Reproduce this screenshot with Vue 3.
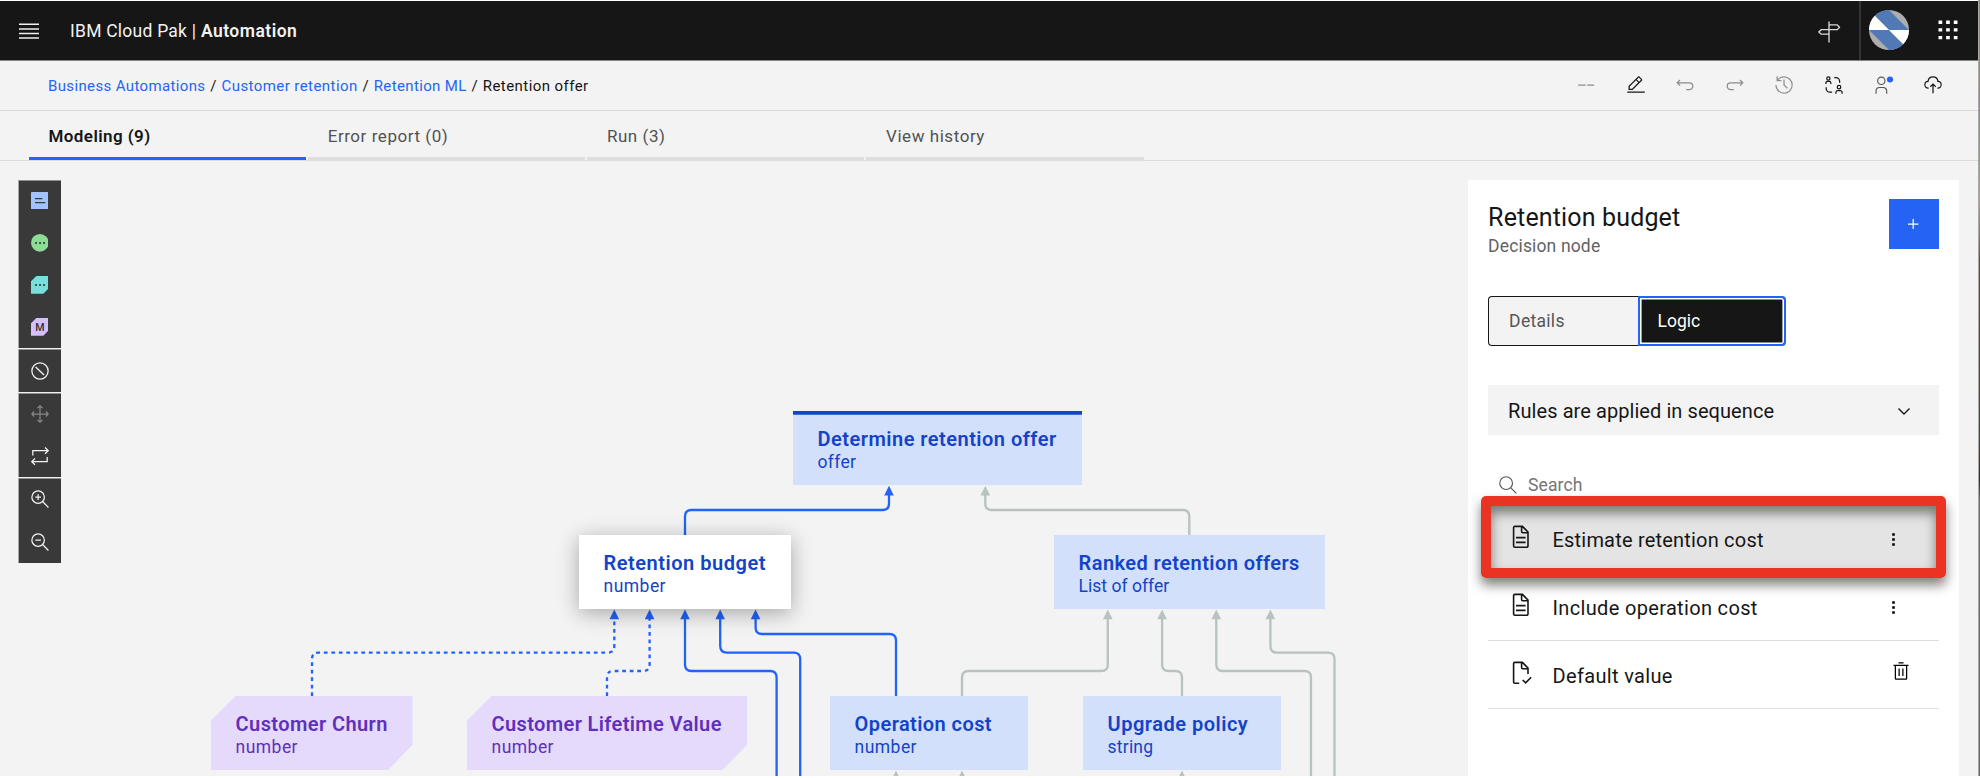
<script setup>
const crumbs = ['Business Automations', 'Customer retention', 'Retention ML']

const tabs = [
  { label: 'Modeling (9)', active: true },
  { label: 'Error report (0)' },
  { label: 'Run (3)' },
  { label: 'View history' },
]

const tools = [
  ['decision', 'data', 'function', 'ml'],
  ['none'],
  ['move', 'swap'],
  ['zoom-in', 'zoom-out'],
]

const ORIGIN_Y = 161

const nodes = [
  { title: 'Determine retention offer', type: 'offer', x: 793, y: 411, w: 289, kind: 'root', ls: 0.48, lt: 0.3 },
  { title: 'Retention budget', type: 'number', x: 579, y: 535, w: 212, kind: 'selected', ls: 0.52, lt: 0.45 },
  { title: 'Ranked retention offers', type: 'List of offer', x: 1054, y: 535, w: 271, kind: 'decision', ls: 0.43, lt: 0.02 },
  { title: 'Customer Churn', type: 'number', x: 211, y: 696, w: 201.5, kind: 'model', ls: 0.41, lt: 0.45 },
  { title: 'Customer Lifetime Value', type: 'number', x: 467, y: 696, w: 280, kind: 'model', ls: 0.37, lt: 0.45 },
  { title: 'Operation cost', type: 'number', x: 830, y: 696, w: 198, kind: 'decision', ls: 0.42, lt: 0.45 },
  { title: 'Upgrade policy', type: 'string', x: 1083, y: 696, w: 198, kind: 'decision', ls: 0.5, lt: 0.2 },
]

/* from (x1, y1) up to the bend line, across, then up to the arrow at (x2, y2) */
const links = [
  { x1: 685, y1: 535, bend: 510, x2: 889, y2: 485.7, kind: 'blue' },
  { x1: 1189.3, y1: 535, bend: 510, x2: 985.3, y2: 485.7, kind: 'grey' },
  { x1: 312, y1: 696, bend: 652.6, x2: 614.3, y2: 609.5, kind: 'blue dashed' },
  { x1: 607, y1: 696, bend: 671, x2: 649.6, y2: 609.5, kind: 'blue dashed' },
  { x1: 776.6, y1: 790, bend: 671, x2: 685, y2: 609.5, kind: 'blue' },
  { x1: 800.2, y1: 790, bend: 652.6, x2: 720.2, y2: 609.5, kind: 'blue' },
  { x1: 896, y1: 696, bend: 634, x2: 755.6, y2: 609.5, kind: 'blue' },
  { x1: 962, y1: 696, bend: 671, x2: 1107.8, y2: 609.5, kind: 'grey' },
  { x1: 1182, y1: 696, bend: 671, x2: 1162.1, y2: 609.5, kind: 'grey' },
  { x1: 1311, y1: 790, bend: 671, x2: 1216.3, y2: 609.5, kind: 'grey' },
  { x1: 1334.5, y1: 790, bend: 652.6, x2: 1270.4, y2: 609.5, kind: 'grey' },
]
const stubs = [896, 962, 1182]

function linkPath({ x1, y1, bend, x2, y2 }) {
  const r = 6.5
  const d = Math.sign(x2 - x1)
  return `M${x1} ${y1}V${bend + r}Q${x1} ${bend} ${x1 + d * r} ${bend}H${x2 - d * r}Q${x2} ${bend} ${x2} ${bend - r}V${y2 + 8}`
}
function arrow(x, y) {
  return `M${x} ${y}l4.8 9.8h-9.6z`
}
</script>

<template>
  <div class="app">
    <div class="main">
      <header class="topbar">
        <svg class="burger" viewBox="0 0 20 16"><path d="M0 1.3h20M0 5.9h20M0 10.5h20M0 15h20" /></svg>
        <div class="brand"><span>IBM Cloud Pak | </span><b>Automation</b></div>
        <svg class="sign" viewBox="0 0 32 32">
          <path d="M16 2v28M16 6.5h11l3 3.2-3 3.2H5.5l-3 3 3 3H16" />
        </svg>
        <div class="rule"></div>
        <svg class="avatar" viewBox="-20 -20 40 40">
          <defs><clipPath id="disc"><circle r="20" /></clipPath></defs>
          <g clip-path="url(#disc)">
            <rect x="-20" y="-20" width="40" height="40" fill="#adadad" />
            <path d="M0 0L-20-20H0L20 0zM0 0L20 20H0L-20 0z" fill="#5079b6" />
            <path d="M0 0L-20-20V0zM0 0L20 20V0z" fill="#fff" />
          </g>
        </svg>
        <svg class="apps" viewBox="0 0 20 20">
          <path d="M.5.5h3.7v3.4H.5zM8.1.5h3.7v3.4H8.1zM15.8.5h3.7v3.4h-3.7zM.5 8.2h3.7v3.4H.5zM8.1 8.2h3.7v3.4H8.1zM15.8 8.2h3.7v3.4h-3.7zM.5 15.9h3.7v3.4H.5zM8.1 15.9h3.7v3.4H8.1zM15.8 15.9h3.7v3.4h-3.7z" />
        </svg>
      </header>

      <div class="crumbbar">
        <nav class="crumbs">
          <template v-for="c in crumbs" :key="c"><a>{{ c }}</a><i>/</i></template>
          <span>Retention offer</span>
        </nav>
        <div class="actions">
          <div><svg viewBox="0 0 32 32" class="line dim"><path d="M3.5 16h12M18 16h11" /></svg></div>
          <div>
            <svg viewBox="0 0 32 32">
              <path d="M2 26.5h28v2H2zM25.4 9c.8-.8.8-2 0-2.8l-3.6-3.6c-.8-.8-2-.8-2.8 0l-15 15V24h6.4zM20.4 4L24 7.6l-3 3L17.4 7zM6 22v-3.6l10-10 3.6 3.6-10 10z" />
            </svg>
          </div>
          <div><svg viewBox="0 0 32 32" class="line dim"><path d="M8 8L3.5 12.500l4.500 4.500M3 12.500h20a5.500 5.500 0 0 1 0 11H18" /></svg></div>
          <div><svg viewBox="0 0 32 32" class="line dim"><path d="M24 8l4.500 4.500-4.500 4.500M29 12.500h-20a5.500 5.500 0 0 0 0 11H14" /></svg></div>
          <div>
            <svg viewBox="0 0 32 32" class="faded">
              <path d="M20.590 22L15 16.410V7h2v8.580l5 5.010zM16 2A13.940 13.940 0 0 0 6 6.230V2H4v8h8V8H7.080A12 12 0 1 1 4 16H2A14 14 0 1 0 16 2z" />
            </svg>
          </div>
          <div>
            <svg viewBox="0 0 32 32" class="line">
              <circle cx="7" cy="5.500" r="2.600" /><path d="M3 14.500V13c0-2 1-2.800 2.500-2.800h3c1.500 0 2.500.8 2.500 2.800v1.500" />
              <circle cx="24" cy="19.500" r="2.800" /><path d="M19 30v-2c0-2 1-3 2.700-3h4.600c1.700 0 2.700 1 2.700 3v2" />
              <path d="M16.500 4h2.500a6 6 0 0 1 6 6v2.500M3.500 19.500v2a6 6 0 0 0 6 6H13" />
            </svg>
          </div>
          <div>
            <svg viewBox="0 0 32 32" class="line thin">
              <circle cx="11.700" cy="9.200" r="5.900" />
              <path d="M3.300 30v-4.500a5.500 5.500 0 0 1 5.500-5.500h6a5.500 5.500 0 0 1 5.500 5.500V30" />
              <circle class="dot" cx="25.600" cy="7.200" r="4.900" />
            </svg>
          </div>
          <div>
            <svg viewBox="0 0 32 32">
              <path d="M11 18l1.410 1.410L15 16.830V29h2V16.830l2.590 2.580L21 18l-5-5z" />
              <path d="M23.500 22H23v-2h.5a4.500 4.500 0 0 0 .36-9L23 11l-.1-.82a7 7 0 0 0-13.880 0L9 11l-.86 0a4.500 4.500 0 0 0 .36 9H9v2h-.5A6.500 6.500 0 0 1 7.200 9.140a9 9 0 0 1 17.600 0A6.500 6.500 0 0 1 23.500 22z" />
            </svg>
          </div>
        </div>
      </div>

      <div class="tabs">
        <div v-for="t in tabs" :key="t.label" class="tab" :class="{ active: t.active }">{{ t.label }}</div>
      </div>

      <div class="workspace">
        <div class="diagram">
          <svg class="links" viewBox="0 161 1978 615">
            <g v-for="(l, i) in links" :key="i" :class="l.kind">
              <path class="wire" :d="linkPath(l)" />
              <path class="head" :d="arrow(l.x2, l.y2)" />
            </g>
            <g v-for="x in stubs" :key="x" class="grey"><path class="head" :d="arrow(x, 770.5)" /></g>
          </svg>
          <div
            v-for="n in nodes" :key="n.title" class="node" :class="n.kind"
            :style="{ left: n.x + 'px', top: n.y - ORIGIN_Y + 'px', width: n.w + 'px' }"
          >
            <div class="ntitle" :style="{ letterSpacing: n.ls + 'px' }">{{ n.title }}</div>
            <div class="ntype" :style="{ letterSpacing: n.lt + 'px' }">{{ n.type }}</div>
          </div>
        </div>

        <aside class="palette">
          <div v-for="(g, gi) in tools" :key="gi" class="group">
            <div v-for="t in g" :key="t" class="tool">
              <svg v-if="t === 'decision'" class="shape" viewBox="0 0 53 53">
                <rect width="53" height="53" rx="2" fill="#a1c2fd" /><path d="M12 20h22M12 32h31" />
              </svg>
              <svg v-else-if="t === 'data'" class="shape" viewBox="0 0 53 53">
                <circle cx="26.500" cy="26.500" r="26.500" fill="#8cdc96" /><path class="dots" d="M15 27h.1M27 27h.1M39 27h.1" />
              </svg>
              <svg v-else-if="t === 'function'" class="shape" viewBox="0 0 53 53">
                <path class="bg" d="M16 0H53V37L37 53H0V16z" fill="#78dfdd" /><path class="dots" d="M15 27h.1M27 27h.1M39 27h.1" />
              </svg>
              <svg v-else-if="t === 'ml'" class="shape" viewBox="0 0 53 53">
                <path class="bg" d="M16 0H53V37L37 53H0V16z" fill="#d4bffc" /><text x="26.500" y="38.500">M</text>
              </svg>
              <svg v-else-if="t === 'none'" viewBox="0 0 32 32"><circle cx="16" cy="16" r="13" /><path d="M9 9.500l13.500 13" /></svg>
              <svg v-else-if="t === 'move'" class="off" viewBox="0 0 32 32">
                <path d="M16 3v26M3 16h26M12 6.500L16 3l4 3.500M12 25.500l4 3.500 4-3.500M6.500 12L3 16l3.500 4M25.500 12l3.500 4-3.500 4" />
              </svg>
              <svg v-else-if="t === 'swap'" viewBox="0 0 32 32">
                <path d="M4.500 15V7.500H29M24 2.500l5.200 5L24 12.500M27.500 17.500V25H3M8 20l-5.200 5L8 30" />
              </svg>
              <svg v-else viewBox="0 0 32 32">
                <circle cx="13" cy="13" r="10" /><path d="M20.500 20.500l9 9M8.500 13h9" /><path v-if="t === 'zoom-in'" d="M13 8.500v9" />
              </svg>
            </div>
          </div>
        </aside>

        <aside class="panel">
          <div class="phead">
            <div class="pinfo">
              <h1>Retention budget</h1>
              <p>Decision node</p>
            </div>
            <button class="add"><svg viewBox="0 0 10 10"><path d="M5 0v10M0 5h10" /></svg></button>
          </div>
          <div class="switch"><div class="details">Details</div><div class="logic">Logic</div></div>
          <div class="select">
            <span>Rules are applied in sequence</span>
            <svg viewBox="0 0 12 7"><path d="M.5.5L6 6 11.500.5" /></svg>
          </div>
          <div class="search">
            <svg viewBox="0 0 32 32"><circle cx="13" cy="13" r="10.200" /><path d="M20.500 20.500l9 9" /></svg>
            <span>Search</span>
          </div>
          <div class="row current">
            <svg class="doc" viewBox="0 0 32 32"><path d="M18 3H8.500A1.500 1.500 0 0 0 7 4.500v23A1.500 1.500 0 0 0 8.500 29h15a1.500 1.500 0 0 0 1.500-1.500V10zM17 3v6.500A1.500 1.500 0 0 0 18.500 11H25M10 17h12M10 23h12" /></svg>
            <span class="r1">Estimate retention cost</span>
            <svg class="more" viewBox="0 0 3 13"><path d="M.2.2h2.600v2.600H.2zM.2 5.200h2.600v2.600H.2zM.2 10.200h2.600v2.600H.2z" /></svg>
          </div>
          <div class="row">
            <svg class="doc" viewBox="0 0 32 32"><path d="M18 3H8.500A1.500 1.500 0 0 0 7 4.500v23A1.500 1.500 0 0 0 8.500 29h15a1.500 1.500 0 0 0 1.500-1.500V10zM17 3v6.500A1.500 1.500 0 0 0 18.500 11H25M10 17h12M10 23h12" /></svg>
            <span class="r2">Include operation cost</span>
            <svg class="more" viewBox="0 0 3 13"><path d="M.2.2h2.600v2.600H.2zM.2 5.200h2.600v2.600H.2zM.2 10.200h2.600v2.600H.2z" /></svg>
          </div>
          <div class="row">
            <svg class="doc" viewBox="0 0 32 32"><path d="M14 29H8.500A1.500 1.500 0 0 1 7 27.500v-23A1.500 1.500 0 0 1 8.500 3H18l7 7v7.500M17 3v6.500A1.500 1.500 0 0 0 18.500 11H25M18.300 25l3.700 3.500 7-7" /></svg>
            <span class="r2">Default value</span>
            <svg class="trash" viewBox="0 0 32 32"><path d="M12 12h2v12h-2zM18 12h2v12h-2zM4 6v2h2v20a2 2 0 0 0 2 2h16a2 2 0 0 0 2-2V8h2V6zM8 28V8h16v20zM12 2h8v2h-8z" /></svg>
          </div>
        </aside>

        <div class="callout"></div>
      </div>
    </div>
    <div class="edge"></div>
  </div>
</template>

<style>
body { margin: 0; background: #fff; }
</style>

<style scoped>
.app { width: 1980px; height: 776px; display: flex; overflow: hidden; font-family: Roboto, "Liberation Sans", sans-serif; color: #161616; }
.app * { box-sizing: border-box; }
.main { flex: 1; display: flex; flex-direction: column; background: #f3f3f3; min-width: 0; }
.edge { width: 2px; border-left: 1px solid #a9a9a7; background: linear-gradient(#8a8885, #8f8a84 100px, #a89d90 200px, #8b8074 230px, #5c4d40 260px, #4d453d 440px, #2a2a2c 480px, #6c6c6e 500px, #606062); }
svg { display: block; flex: none; }

.topbar { height: 61px; border-top: 1px solid #fff; border-bottom: 1px solid #858585; background: #161616; display: flex; align-items: center; padding-left: 18.6px; color: #f2f2f2; }
.burger { width: 20px; height: 16px; stroke: #f0f0f0; stroke-width: 1.5; }
.brand { margin-left: 31.4px; flex: 1; font-size: 17.5px; line-height: 24px; letter-spacing: .24px; white-space: pre; margin-top: 0; }
.brand b { font-weight: 600; letter-spacing: .48px; }
.sign { width: 24px; height: 24px; fill: none; stroke: #d8d8d8; stroke-width: 1.8; margin-top: 2px; margin-right: 18px; }
.rule { width: 2px; align-self: stretch; background: #343434; margin-right: 8px; }
.avatar { width: 40px; height: 40px; margin-top: -1px; margin-right: 29.5px; }
.apps { width: 20px; height: 20px; fill: #fff; margin-right: 20px; margin-top: -1px; }

.crumbbar { height: 50px; border-bottom: 1px solid #dcdcdc; display: flex; justify-content: space-between; align-items: center; padding: 0 19.5px 0 48px; }
.crumbs { display: flex; font-size: 15px; line-height: 20px; letter-spacing: .36px; margin-top: 0; color: #161616; }
.crumbs a { color: #2465f4; }
.crumbs a:nth-of-type(2), .crumbs span { letter-spacing: .43px; }
.crumbs i { font-style: normal; width: 16.1px; text-align: center; }
.actions { display: flex; margin-right: .5px; margin-top: -1px; }
.actions div { width: 49.6px; display: flex; justify-content: center; }
.actions svg { width: 20px; height: 20px; fill: #161616; }
.actions .line { fill: none; stroke: #161616; stroke-width: 2; }
.actions .dim { stroke: #8c8c8c; }
.actions .thin { stroke: #555; stroke-width: 1.8; }
.actions .faded { fill: #8f8f8f; }
.actions .dot { fill: #2464fb; stroke: none; }

.tabs { height: 50px; box-shadow: inset 0 -1px #dcdcdc; display: flex; gap: 1.6px; padding-left: 28.5px; }
.tab { width: 277.6px; border-bottom: 4px solid #dedede; padding-left: 20px; font-size: 17px; line-height: 49px; padding-top: 1px; letter-spacing: .55px; color: #525252; }
.tab.active { border-bottom: 3px solid #2464fb; height: 49px; color: #161616; font-weight: 600; letter-spacing: .42px; }

.workspace { flex: 1; position: relative; display: flex; justify-content: space-between; align-items: flex-start; padding: 18.5px 19.5px 0 18.3px; overflow: hidden; }
.diagram { position: absolute; inset: 0; }
.links { position: absolute; left: 0; top: 0; width: 1978px; height: 615px; }
.wire { fill: none; stroke-width: 2.3; }
.blue .wire { stroke: #2263fb; }
.blue .head { fill: #2263fb; }
.grey .wire { stroke: #b8c2bf; }
.grey .head { fill: #b8c2bf; }
.dashed .wire { stroke-dasharray: 3.75 3.75; }
.node { position: absolute; height: 74px; background: #d3e0fc; color: #1443c8; padding: 16px 0 0 24.6px; white-space: nowrap; }
.node.root { box-shadow: inset 0 3.7px #1345c6; }
.node.selected { background: #fff; box-shadow: 0 4px 20px rgba(0, 0, 0, .32); }
.node.model { background: #e5dafb; color: #5f30bb; clip-path: polygon(24.5px 0, 100% 0, 100% 49px, calc(100% - 24.5px) 100%, 0 100%, 0 24.5px); }
.ntitle { font-size: 20px; line-height: 24px; font-weight: 600; }
.ntype { font-size: 17.5px; line-height: 22px; }

.palette { position: relative; width: 42.7px; display: flex; flex-direction: column; gap: 1.2px; background: #f0f0f0; }
.group { background: #393939; border-left: 1px solid #a8a8a8; box-shadow: inset 0 1px #8f8f8f; }
.tool { height: 42.2px; display: flex; align-items: center; justify-content: center; padding-right: 1px; }
.tool svg { width: 20px; height: 20px; fill: none; stroke: #f4f4f4; stroke-width: 2; }
.tool svg.off { stroke: #858585; }
.tool svg.shape { width: 17.7px; height: 17.7px; stroke: #393939; stroke-width: 4; }
.tool .shape rect, .tool .shape circle, .tool .shape .bg { stroke: none; }
.shape .dots { stroke-width: 6.5; stroke-linecap: round; }
.shape text { fill: #303030; stroke: none; font-size: 32px; font-weight: 500; text-anchor: middle; }

.panel { position: relative; width: 490.4px; height: 597px; background: #fff; padding: 19.5px 20px 0; display: flex; flex-direction: column; }
.phead { height: 97px; display: flex; justify-content: space-between; align-items: flex-start; }
.pinfo { padding-top: 4px; }
h1 { margin: 0; font-size: 25px; line-height: 30px; font-weight: 400; letter-spacing: .15px; }
p { margin: 2px 0 0; font-size: 17.5px; line-height: 22px; letter-spacing: .15px; color: #636363; }
.add { width: 50px; height: 50px; border: 0; padding: 0; background: #2563f5; display: flex; align-items: center; justify-content: center; }
.add svg { width: 10.4px; height: 10.4px; stroke: #fff; stroke-width: 1.2; }
.switch { width: 297.4px; height: 49.5px; display: flex; font-size: 17.5px; line-height: 47px; }
.details { width: 149.5px; background: #f3f3f3; border: 1px solid #161616; border-right: 0; border-radius: 4px 0 0 4px; padding-left: 20px; padding-top: 1px; color: #565656; letter-spacing: .3px; }
.logic { flex: 1; background: #161616; border: 2px solid #2463fb; border-radius: 0 4px 4px 0; box-shadow: inset 0 0 0 1.6px #fff; color: #fff; padding-left: 18px; line-height: 46px; }
.select { margin-top: 39.5px; height: 50px; background: #f3f3f3; display: flex; align-items: center; justify-content: space-between; padding: 2px 29px 0 20px; font-size: 20px; letter-spacing: .07px; }
.select svg { width: 12px; height: 7px; fill: none; stroke: #161616; stroke-width: 1.4; }
.search { margin-top: 25px; height: 45px; padding: 5px 0 0 10px; display: flex; align-items: center; font-size: 17.5px; letter-spacing: .1px; color: #757575; }
.search svg { width: 20px; height: 20px; fill: none; stroke: #555; stroke-width: 1.8; margin-right: 10px; }
.row { height: 68px; flex: none; display: flex; align-items: center; border-bottom: 1px solid #dedede; padding-left: 19.6px; font-size: 20px; line-height: 24px; }
.row span { flex: 1; margin-left: 19.2px; padding-top: 2px; }
.row .r1 { letter-spacing: .2px; }
.row .r2 { letter-spacing: .34px; }
.current { background: #e4e4e4; }
.doc { width: 25.6px; height: 25.6px; fill: none; stroke: #161616; stroke-width: 2; margin-top: -3px; }
.more { width: 3px; height: 13px; margin-right: 43.3px; margin-top: 2px; }
.trash { width: 20px; height: 20px; margin-right: 27.5px; margin-top: -8px; }

.callout { position: absolute; left: 1481px; top: 335px; width: 465px; height: 82px; border: 10px solid #ea3323; border-radius: 5px; box-shadow: 0 7px 12px rgba(0, 0, 0, .5), inset 0 7px 12px rgba(0, 0, 0, .48); }
</style>
